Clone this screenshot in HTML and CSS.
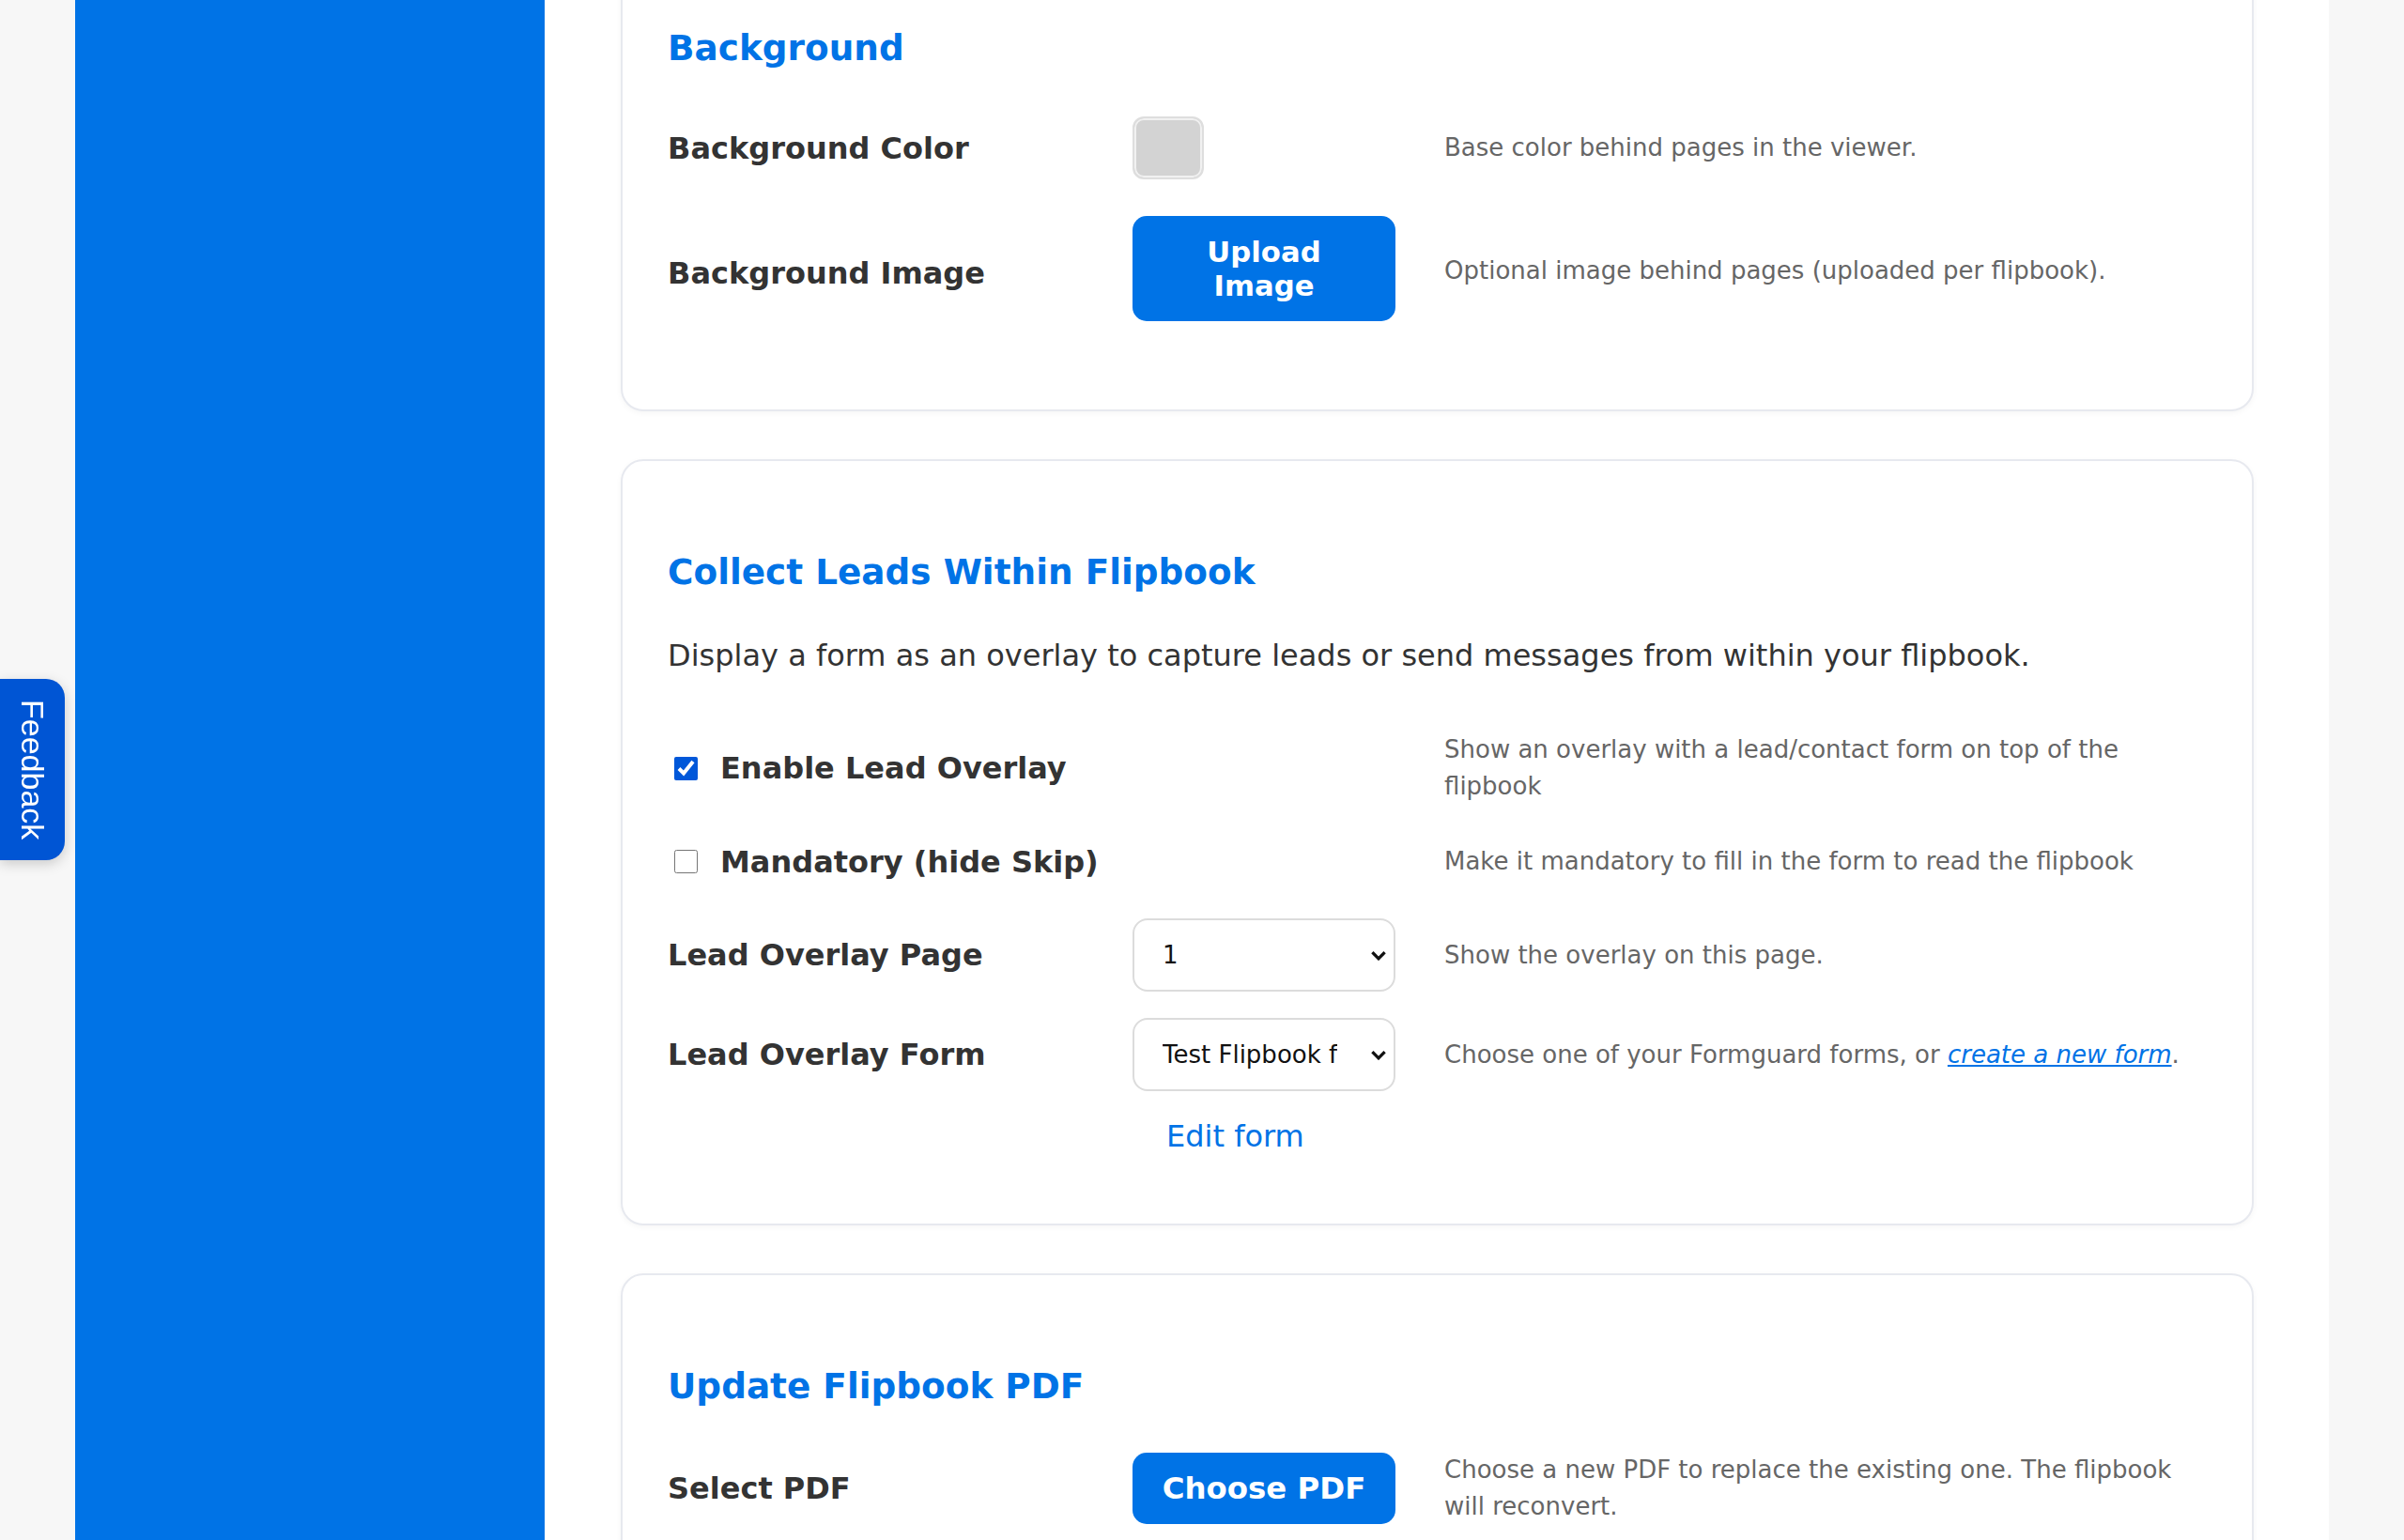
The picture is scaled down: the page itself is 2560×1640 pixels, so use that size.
FILE: index.html
```html
<!DOCTYPE html>
<html lang="en">
<head>
    <meta charset="UTF-8">
    <meta name="viewport" content="width=device-width, initial-scale=1.0">
    <title>Flipbook Settings</title>
    <link rel="stylesheet" href="styles.css">
</head>
<body>
    <div class="layout">
        <aside class="sidebar"></aside>

        <main class="main">
            <!-- Background -->
            <section class="card card-first">
                <h2 class="card-title">Background</h2>
                <div class="field">
                    <label class="field-label">Background Color</label>
                    <div class="field-control">
                        <span class="swatch"></span>
                    </div>
                    <p class="field-help">Base color behind pages in the viewer.</p>
                </div>
                <div class="field field-offset">
                    <label class="field-label">Background Image</label>
                    <div class="field-control">
                        <button class="btn-primary">Upload Image</button>
                    </div>
                    <p class="field-help">Optional image behind pages (uploaded per flipbook).</p>
                </div>
            </section>

            <!-- Lead overlay -->
            <section class="card">
                <h2 class="card-title">Collect Leads Within Flipbook</h2>
                <p class="card-intro">Display a form as an overlay to capture leads or send messages from within your flipbook.</p>

                <div class="field">
                    <label class="field-label field-check">
                        <input type="checkbox" checked>
                        <span>Enable Lead Overlay</span>
                    </label>
                    <p class="field-help">Show an overlay with a lead/contact form on top of the flipbook</p>
                </div>
                <div class="field">
                    <label class="field-label field-check">
                        <input type="checkbox">
                        <span>Mandatory (hide Skip)</span>
                    </label>
                    <p class="field-help">Make it mandatory to fill in the form to read the flipbook</p>
                </div>
                <div class="field field-select">
                    <label class="field-label">Lead Overlay Page</label>
                    <div class="field-control select-wrap">
                        <select class="select">
                            <option>1</option>
                            <option>2</option>
                            <option>3</option>
                        </select>
                        <svg class="select-arrow" viewBox="0 0 16 10">
                            <path d="M2 2l6 6 6-6"/>
                        </svg>
                    </div>
                    <p class="field-help">Show the overlay on this page.</p>
                </div>
                <div class="field field-select">
                    <label class="field-label">Lead Overlay Form</label>
                    <div class="field-control select-wrap">
                        <select class="select">
                            <option>Test Flipbook form</option>
                        </select>
                        <svg class="select-arrow" viewBox="0 0 16 10">
                            <path d="M2 2l6 6 6-6"/>
                        </svg>
                    </div>
                    <p class="field-help">Choose one of your Formguard forms, or <a href="#" class="help-link">create a new form</a>.</p>
                </div>
                <div class="field field-link">
                    <a href="#" class="edit-link">Edit form</a>
                </div>
            </section>

            <!-- Update PDF -->
            <section class="card card-last">
                <h2 class="card-title">Update Flipbook PDF</h2>
                <div class="field">
                    <label class="field-label">Select PDF</label>
                    <div class="field-control">
                        <button class="btn-primary btn-large">Choose PDF</button>
                    </div>
                    <p class="field-help">Choose a new PDF to replace the existing one. The flipbook will reconvert.</p>
                </div>
            </section>
        </main>
    </div>

    <button class="feedback-tab">Feedback</button>
</body>
</html>
```

FILE: styles.css
```css
* {
    box-sizing: border-box;
}

html,
body {
    margin: 0;
    padding: 0;
    height: 100vh;
    overflow: hidden;
}

body {
    font-family: 'DejaVu Sans', sans-serif;
    background: #f7f7f7;
    color: #333;
}

.layout {
    display: flex;
    height: 100vh;
    margin: 0 80px;
}

.sidebar {
    flex: 0 0 500px;
    background: #0073e6;
}

.main {
    flex: 1;
    background: #fff;
    padding: 0 80px 0 81px;
    overflow: hidden;
}

/* Cards */
.card {
    background: #fff;
    border: 2px solid #e7e9ef;
    border-radius: 24px;
    padding: 48px 48px 58px;
    margin-bottom: 51px;
    box-shadow: 0 2px 6px rgba(0, 0, 0, 0.04);
}

/* page is scrolled a little, first card starts above the fold */
.card-first {
    margin-top: -69px;
}

.card-last {
    padding-bottom: 400px;
}

.card-title {
    margin: 48px 0 48px;
    font-size: 37.4px;
    line-height: 44px;
    font-weight: 700;
    color: #0073e6;
}

.card-intro {
    margin: 0 0 62px;
    font-size: 32px;
    line-height: 1.2;
    color: #333;
}

/* Field rows */
.field {
    display: grid;
    grid-template-columns: 443px 280px 1fr;
    column-gap: 52px;
    align-items: center;
    margin-bottom: 36px;
}

.field-select {
    margin-bottom: 28px;
}

.field-offset .field-label {
    padding-top: 10px;
}

.field-offset .field-help {
    padding-top: 5px;
}

.field-label {
    font-size: 32px;
    line-height: 1.5;
    font-weight: 700;
    color: #333;
}

.field-check {
    grid-column: 1 / span 2;
    display: flex;
    align-items: center;
    gap: 24px;
    min-height: 49px;
}

.field-check input {
    width: 25px;
    height: 25px;
    margin: 0 0 0 7px;
    accent-color: #0057d9;
}

.field-help {
    grid-column: 3;
    margin: 0;
    font-size: 26px;
    line-height: 1.5;
    color: #666;
}

.help-link {
    color: #0073e6;
    font-style: italic;
}

.swatch {
    display: block;
    width: 76px;
    height: 67px;
    margin: 3px 0;
    background: #d3d3d3;
    border: 2px solid #dedede;
    border-radius: 12px;
    box-shadow: inset 0 0 0 2px #f1f1f1;
}

.btn-primary {
    display: block;
    width: 100%;
    padding: 20px 30px;
    background: #0073e6;
    color: #fff;
    border: none;
    border-radius: 15px;
    font-family: 'DejaVu Sans', sans-serif;
    font-size: 30.72px;
    line-height: 36px;
    font-weight: 700;
    cursor: pointer;
}

.btn-large {
    font-size: 32.4px;
}

/* Selects */
.select-wrap {
    position: relative;
    height: 78px;
    background: #fff;
    border: 2px solid #dcdcdc;
    border-radius: 16px;
}

.select {
    appearance: none;
    -webkit-appearance: none;
    display: block;
    width: 216px;
    height: 100%;
    padding: 0 0 0 30px;
    background: transparent;
    border: none;
    border-radius: 14px 0 0 14px;
    font-family: 'DejaVu Sans', sans-serif;
    font-size: 26px;
    color: #111;
    outline: none;
}

.select-arrow {
    position: absolute;
    right: 7px;
    top: 32px;
    width: 18px;
    height: 11px;
    fill: none;
    stroke: #111;
    stroke-width: 3;
    pointer-events: none;
}

.field-link {
    margin: 34px 0 21px;
}

.edit-link {
    grid-column: 2;
    padding-left: 36px;
    font-size: 32px;
    line-height: 28px;
    color: #0073e6;
    text-decoration: none;
}

/* Feedback tab */
.feedback-tab {
    position: fixed;
    left: 0;
    top: 723px;
    width: 69px;
    height: 193px;
    padding: 0;
    background: #0055d4;
    color: #fff;
    border: none;
    border-radius: 0 20px 20px 0;
    box-shadow: 0 4px 14px rgba(0, 0, 0, 0.18);
    writing-mode: vertical-rl;
    font-family: 'Liberation Sans', Arial, sans-serif;
    font-size: 34px;
    text-align: center;
    cursor: pointer;
}
```
